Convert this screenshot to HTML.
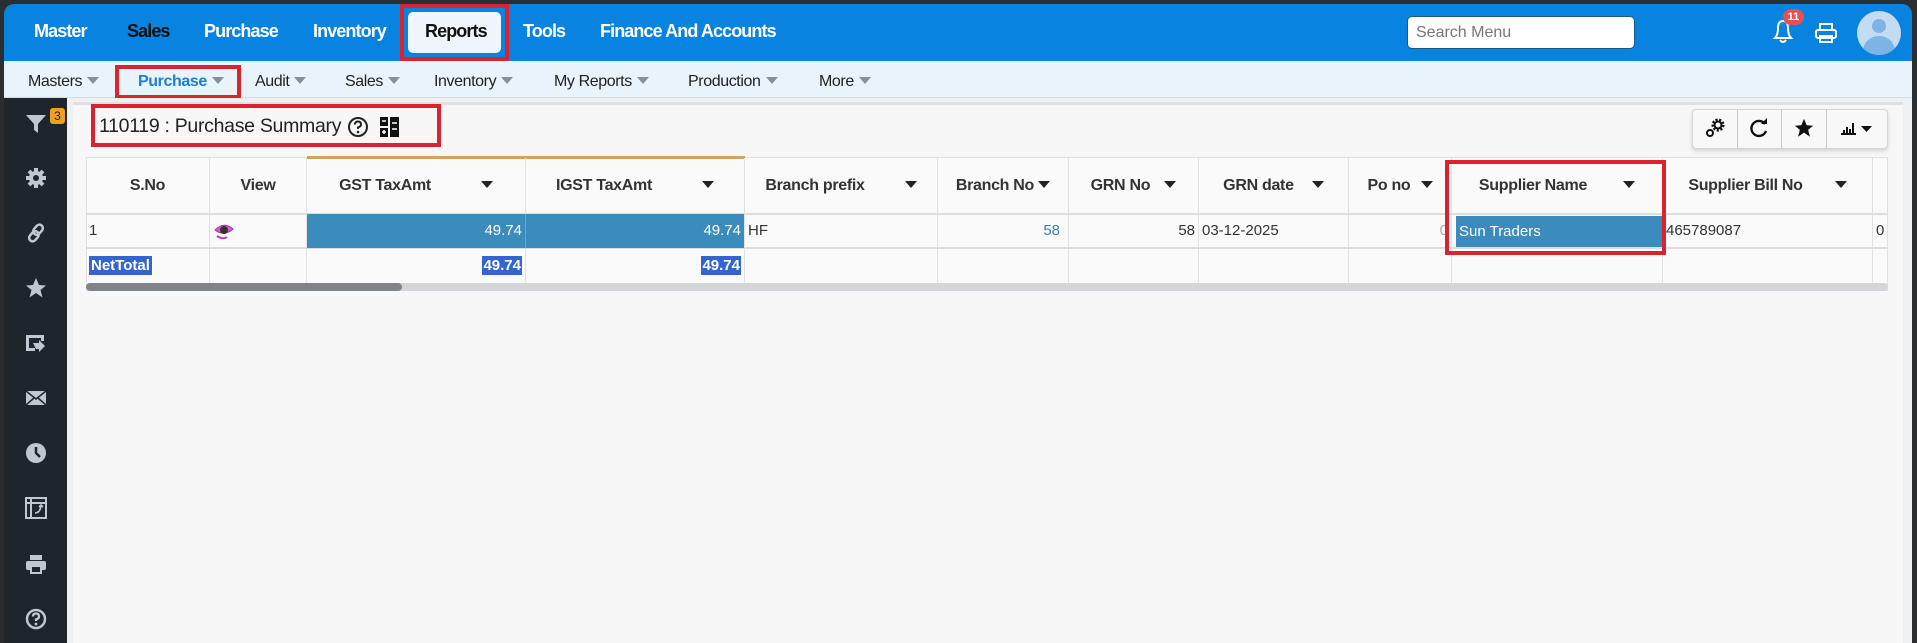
<!DOCTYPE html>
<html><head><meta charset="utf-8"><style>
*{box-sizing:border-box;margin:0;padding:0}
body{width:1917px;height:643px;overflow:hidden;background:#2b2e31;font-family:"Liberation Sans",sans-serif;position:relative}
.a{position:absolute}
.top{left:4px;top:4px;width:1908px;height:57px;background:#0883e0;border-radius:10px 10px 0 0}
.tn{position:absolute;top:21px;font-size:18px;font-weight:bold;color:#fff;letter-spacing:-0.9px}
.sub{left:4px;top:61px;width:1908px;height:37px;background:#e9f3fb;border-bottom:1px solid #d5dde4}
.sn{position:absolute;top:73px;font-size:16px;color:#222;letter-spacing:-0.4px}
.car{display:inline-block;width:0;height:0;border-left:6px solid transparent;border-right:6px solid transparent;border-top:7px solid #8a8f94;margin-left:5px;vertical-align:2px}
.side{left:4px;top:98px;width:63px;height:545px;background:#1e252b}
.main{left:67px;top:98px;width:1845px;height:545px;background:#eef0f2}
.panel{left:73px;top:102px;width:1830px;height:541px;background:#f7f7f7;border-top:3px solid #dfe2e5}
.red{position:absolute;border:4px solid #d9232e}
.th{position:absolute;top:158px;height:56px;border-right:1px solid #e1e1e1;font-size:16px;font-weight:bold;color:#333;text-align:center;line-height:56px;letter-spacing:-0.3px}
.dc{display:inline-block;width:0;height:0;border-left:6px solid transparent;border-right:6px solid transparent;border-top:7px solid #222;vertical-align:2px}
.td{position:absolute;height:34px;border-right:1px solid #e1e1e1;font-size:15px;color:#333;line-height:34px;padding:0 3px}
.ic{position:absolute;left:24px;width:24px;height:24px}
</style></head><body>
<div class="a top"></div>
<div class="tn" style="left:34px">Master</div>
<div class="tn" style="left:127px;color:#111">Sales</div>
<div class="tn" style="left:204px">Purchase</div>
<div class="tn" style="left:313px">Inventory</div>
<div class="a" style="left:400px;top:4px;width:109px;height:57px;border:4px solid #d9232e"></div>
<div class="a" style="left:408px;top:12px;width:93px;height:41px;background:#eef5fc;border-radius:5px"></div>
<div class="tn" style="left:425px;color:#111">Reports</div>
<div class="tn" style="left:523px">Tools</div>
<div class="tn" style="left:600px">Finance And Accounts</div>
<div class="a" style="left:1407px;top:16px;width:228px;height:33px;background:#fff;border:1px solid #1d5b7a;border-radius:5px;font-size:16px;color:#777;padding:7px 8px">Search Menu</div>
<svg class="a" style="left:1770px;top:14px" width="30" height="32" viewBox="0 0 30 32"><path d="M5 24 Q8 21 8 14 Q8 7 13 7 Q18 7 18 14 Q18 21 21 24 Z" fill="none" stroke="#fff" stroke-width="2"/><path d="M10 26 Q13 30 16 26" fill="none" stroke="#fff" stroke-width="2"/></svg>
<div class="a" style="left:1783px;top:9px;width:21px;height:16px;background:#e3524f;border-radius:8px;color:#fff;font-size:11px;font-weight:bold;text-align:center;line-height:16px">11</div>
<svg class="a" style="left:1814px;top:22px" width="24" height="22" viewBox="0 0 24 22"><rect x="6" y="2" width="12" height="6" fill="none" stroke="#fff" stroke-width="2"/><rect x="2" y="8" width="20" height="8" rx="2" fill="none" stroke="#fff" stroke-width="2"/><rect x="6" y="14" width="12" height="6" fill="none" stroke="#fff" stroke-width="2"/></svg>
<div class="a" style="left:1857px;top:11px;width:44px;height:44px;border-radius:50%;background:#c3dcf4;overflow:hidden"><div class="a" style="left:15px;top:8px;width:14px;height:14px;border-radius:50%;background:#7eb3e6"></div><div class="a" style="left:6px;top:25px;width:32px;height:30px;border-radius:50%;background:#7eb3e6"></div></div>

<div class="a sub"></div>
<div class="sn" style="left:28px">Masters<span class="car"></span></div>
<div class="sn" style="left:138px;color:#1d7fd0;font-weight:bold">Purchase<span class="car"></span></div>
<div class="a" style="left:115px;top:65px;width:126px;height:34px;border:4px solid #d9232e"></div>
<div class="sn" style="left:255px">Audit<span class="car"></span></div>
<div class="sn" style="left:345px">Sales<span class="car"></span></div>
<div class="sn" style="left:434px">Inventory<span class="car"></span></div>
<div class="sn" style="left:554px">My Reports<span class="car"></span></div>
<div class="sn" style="left:688px">Production<span class="car"></span></div>
<div class="sn" style="left:819px">More<span class="car"></span></div>

<div class="a side"></div>
<div class="a main"></div>
<div class="a panel"></div>

<svg class="ic" style="top:112px" viewBox="0 0 24 24"><path d="M2 3h20l-8 9v9l-4-3v-6z" fill="#bfc8d0"/></svg>
<div class="a" style="left:50px;top:108px;width:15px;height:16px;background:#f0a020;border-radius:3px;font-size:12px;color:#222;text-align:center;line-height:16px">3</div>
<svg class="ic" style="top:166px" viewBox="0 0 24 24"><circle cx="12" cy="12" r="7" fill="#bfc8d0"/><g stroke="#bfc8d0" stroke-width="4"><path d="M12 2v20M2 12h20M5 5l14 14M19 5L5 19"/></g><circle cx="12" cy="12" r="3" fill="#1e252b"/></svg>
<svg class="ic" style="top:221px" viewBox="0 0 24 24"><g fill="none" stroke="#bfc8d0" stroke-width="2.5"><rect x="11" y="3" width="7" height="11" rx="3.5" transform="rotate(40 14 8)"/><rect x="6" y="10" width="7" height="11" rx="3.5" transform="rotate(40 10 16)"/></g></svg>
<svg class="ic" style="top:276px" viewBox="0 0 24 24"><path d="M12 2l3 7 7 .5-5.5 4.5 2 7.5L12 17l-6.5 4.5 2-7.5L2 9.5 9 9z" fill="#bfc8d0"/></svg>
<svg class="ic" style="top:331px" viewBox="0 0 24 24"><path d="M2 4h18v6h-3V7H5v10h6v3H2z" fill="#bfc8d0"/><path d="M9 12l6 0 0-3 6 6-6 6 0-3-3 0z" fill="#bfc8d0"/></svg>
<svg class="ic" style="top:386px" viewBox="0 0 24 24"><rect x="2" y="5" width="20" height="14" fill="#bfc8d0"/><path d="M2 5l10 8 10-8M2 19l8-7M22 19l-8-7" stroke="#1e252b" stroke-width="1.5" fill="none"/></svg>
<svg class="ic" style="top:441px" viewBox="0 0 24 24"><circle cx="12" cy="12" r="10" fill="#bfc8d0"/><path d="M12 6v6l4 4" stroke="#1e252b" stroke-width="2.5" fill="none"/></svg>
<svg class="ic" style="top:496px" viewBox="0 0 24 24"><rect x="2" y="2" width="20" height="20" fill="none" stroke="#bfc8d0" stroke-width="2"/><path d="M2 7h20M7 2v20" stroke="#bfc8d0" stroke-width="2"/><path d="M11 17q5 0 6-7m-2 1l2-2 2 2" stroke="#bfc8d0" stroke-width="1.6" fill="none"/></svg>
<svg class="ic" style="top:552px" viewBox="0 0 24 24"><rect x="6" y="3" width="12" height="5" fill="#bfc8d0"/><rect x="2" y="9" width="20" height="9" rx="2" fill="#bfc8d0"/><rect x="7" y="14" width="10" height="7" fill="#1e252b" stroke="#bfc8d0" stroke-width="2"/></svg>
<svg class="ic" style="top:607px" viewBox="0 0 24 24"><circle cx="12" cy="12" r="9" fill="none" stroke="#bfc8d0" stroke-width="2.5"/><path d="M9 9.5q0-3 3-3t3 3q0 2-3 3v1.5" fill="none" stroke="#bfc8d0" stroke-width="2.3"/><circle cx="12" cy="17" r="1.4" fill="#bfc8d0"/></svg>

<div class="red" style="left:91px;top:104px;width:350px;height:43px"></div>
<div class="a" style="left:99px;top:115px;font-size:19.5px;color:#222;letter-spacing:-0.3px">110119 : Purchase Summary</div>
<svg class="a" style="left:347px;top:116px" width="22" height="22" viewBox="0 0 22 22"><circle cx="11" cy="11" r="9" fill="none" stroke="#222" stroke-width="2"/><path d="M8 8.5q0-3 3-3t3 3q0 2-3 3v1.5" fill="none" stroke="#222" stroke-width="2"/><circle cx="11" cy="16" r="1.3" fill="#222"/></svg>
<svg class="a" style="left:380px;top:117px" width="19" height="20" viewBox="0 0 19 20"><rect x="0" y="0" width="8" height="9" fill="#111"/><rect x="0" y="11" width="8" height="9" fill="#111"/><rect x="10" y="0" width="9" height="20" fill="#111"/><path d="M2 4h4M2 15h4M4 13v4M12 6h5M12 12h5" stroke="#fff" stroke-width="1.5"/></svg>

<div class="a" style="left:1692px;top:109px;width:196px;height:40px;background:#f8f8f8;border:1px solid #d5d5d5;border-radius:4px;box-shadow:0 2px 4px rgba(0,0,0,.15)"></div>
<div class="a" style="left:1737px;top:110px;width:1px;height:38px;background:#ccc"></div>
<div class="a" style="left:1781px;top:110px;width:1px;height:38px;background:#ccc"></div>
<div class="a" style="left:1826px;top:110px;width:1px;height:38px;background:#ccc"></div>
<svg class="a" style="left:1705px;top:117px" width="22" height="22" viewBox="0 0 22 22"><circle cx="13" cy="8" r="5" fill="none" stroke="#111" stroke-width="3" stroke-dasharray="2 1.5"/><circle cx="13" cy="8" r="3.5" fill="none" stroke="#111" stroke-width="2"/><circle cx="5" cy="16" r="3" fill="none" stroke="#111" stroke-width="2"/></svg>
<svg class="a" style="left:1748px;top:117px" width="22" height="22" viewBox="0 0 22 22"><path d="M17 7A7.5 7.5 0 1 0 18 14" fill="none" stroke="#111" stroke-width="2.4"/><path d="M13 7h6V1z" fill="#111"/></svg>
<svg class="a" style="left:1793px;top:117px" width="22" height="22" viewBox="0 0 24 24"><path d="M12 2l3 7 7 .5-5.5 4.5 2 7.5L12 17l-6.5 4.5 2-7.5L2 9.5 9 9z" fill="#111"/></svg>
<svg class="a" style="left:1840px;top:120px" width="36" height="16" viewBox="0 0 36 16"><path d="M1 14h15M4 13V10M7 13V7M10 13V9M13 13V3" stroke="#111" stroke-width="2"/><path d="M21 6h11l-5.5 6z" fill="#111"/></svg>

<div class="a" style="left:86px;top:157px;width:1802px;height:134px;border:1px solid #e1e1e1;background:#fafafa"></div>
<div class="a" style="left:307px;top:156px;width:438px;height:3px;background:#d4a35b"></div>
<div class="th" style="left:86px;width:124px">S.No</div>
<div class="th" style="left:210px;width:97px">View</div>
<div class="th" style="left:307px;width:219px">GST TaxAmt<span class="dc" style="margin-left:50px"></span></div>
<div class="th" style="left:526px;width:219px">IGST TaxAmt<span class="dc" style="margin-left:50px"></span></div>
<div class="th" style="left:745px;width:193px">Branch prefix<span class="dc" style="margin-left:40px"></span></div>
<div class="th" style="left:938px;width:131px">Branch No <span class="dc"></span></div>
<div class="th" style="left:1069px;width:130px">GRN No <span class="dc" style="margin-left:10px"></span></div>
<div class="th" style="left:1199px;width:150px">GRN date <span class="dc" style="margin-left:14px"></span></div>
<div class="th" style="left:1349px;width:103px">Po no <span class="dc" style="margin-left:6px"></span></div>
<div class="th" style="left:1452px;width:211px">Supplier Name<span class="dc" style="margin-left:36px"></span></div>
<div class="th" style="left:1663px;width:210px">Supplier Bill No<span class="dc" style="margin-left:32px"></span></div>
<div class="a" style="left:86px;top:213px;width:1802px;height:2px;background:#ddd"></div>
<div class="a" style="left:86px;top:247px;width:1802px;height:2px;background:#ddd"></div>
<div class="td" style="left:86px;top:214px;width:124px">1</div>
<div class="td" style="left:210px;top:214px;width:97px"><svg width="22" height="22" viewBox="0 0 22 22" style="margin-top:6px"><path d="M2 10q9-9 18-1-9 8-18 1z" fill="#d15bd3" stroke="#a9319e"/><circle cx="11" cy="10" r="4" fill="#333"/><path d="M4 16q6 4 10 1" stroke="#c23fb8" stroke-width="2" fill="none"/></svg></div>
<div class="td" style="left:307px;top:214px;width:219px;background:#3b8bbd;color:#fff;text-align:right;border-right:1px solid #6aa7cf">49.74</div>
<div class="td" style="left:526px;top:214px;width:219px;background:#3b8bbd;color:#fff;text-align:right">49.74</div>
<div class="td" style="left:745px;top:214px;width:193px">HF</div>
<div class="td" style="left:938px;top:214px;width:131px;text-align:right;color:#3a7fb0;padding-right:8px">58</div>
<div class="td" style="left:1069px;top:214px;width:130px;text-align:right">58</div>
<div class="td" style="left:1199px;top:214px;width:150px">03-12-2025</div>
<div class="td" style="left:1349px;top:214px;width:103px;text-align:right;color:#aaa">0</div>
<div class="td" style="left:1452px;top:214px;width:211px"></div>
<div class="a" style="left:1456px;top:216px;width:206px;height:31px;background:#3b8bbd;color:#fff;font-size:15px;line-height:31px;padding-left:3px">Sun Traders</div>
<div class="td" style="left:1663px;top:214px;width:210px">465789087</div>
<div class="td" style="left:1873px;top:214px;width:15px">0</div>
<div class="td" style="left:86px;top:249px;width:124px"><span style="background:#3366cc;color:#fff;font-weight:bold;padding:1px 2px">NetTotal</span></div>
<div class="td" style="left:210px;top:249px;width:97px"></div>
<div class="td" style="left:307px;top:249px;width:219px;text-align:right"><span style="background:#3366cc;color:#fff;font-weight:bold;padding:1px 1px">49.74</span></div>
<div class="td" style="left:526px;top:249px;width:219px;text-align:right"><span style="background:#3366cc;color:#fff;font-weight:bold;padding:1px 1px">49.74</span></div>
<div class="td" style="left:745px;top:249px;width:193px"></div>
<div class="td" style="left:938px;top:249px;width:131px"></div>
<div class="td" style="left:1069px;top:249px;width:130px"></div>
<div class="td" style="left:1199px;top:249px;width:150px"></div>
<div class="td" style="left:1349px;top:249px;width:103px"></div>
<div class="td" style="left:1452px;top:249px;width:211px"></div>
<div class="td" style="left:1663px;top:249px;width:210px"></div>
<div class="a" style="left:86px;top:283px;width:1802px;height:8px;background:#d3d5d9;border-radius:4px"></div>
<div class="a" style="left:86px;top:283px;width:316px;height:8px;background:#808488;border-radius:4px"></div>
<div class="red" style="left:1445px;top:160px;width:221px;height:95px"></div>
</body></html>
